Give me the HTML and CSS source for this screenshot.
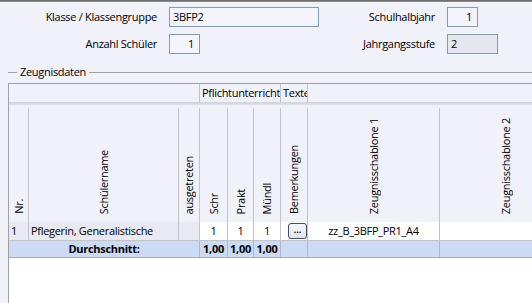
FILE: index.html
```html
<!DOCTYPE html>
<html lang="de">
<head>
<meta charset="utf-8">
<title>Zeugnisdaten</title>
<link rel="stylesheet" href="styles.css">
</head>
<body>
<div class="topline"></div>
<div class="form">
  <div class="lbl">Klasse / Klassengruppe</div>
  <div class="inp w150">3BFP2</div>
  <div class="lbl">Schulhalbjahr</div>
  <div class="inp num w30">1</div>
  <div class="lbl">Anzahl Schüler</div>
  <div class="inp num w30">1</div>
  <div class="lbl">Jahrgangsstufe</div>
  <div class="inp dis w50">2</div>
</div>
<div class="group"><span class="gl-left"></span><span class="gtitle">Zeugnisdaten</span><span class="gl-right"></span></div>
<div class="grid">
  <div class="band b1"></div>
  <div class="band b2">Pflichtunterricht</div>
  <div class="band b3">Texte</div>
  <div class="band b4"></div>
  <div class="sep"></div>

  <div class="hc"><div class="hi"><span class="vt">Nr.</span></div></div>
  <div class="hc"><div class="hi"><span class="vt">Schülername</span></div></div>
  <div class="hc"><div class="hi"><span class="vt">ausgetreten</span></div></div>
  <div class="hc"><div class="hi"><span class="vt">Schr</span></div></div>
  <div class="hc"><div class="hi"><span class="vt">Prakt</span></div></div>
  <div class="hc"><div class="hi"><span class="vt">Mündl</span></div></div>
  <div class="hc"><div class="hi"><span class="vt">Bemerkungen</span></div></div>
  <div class="hc"><div class="hi"><span class="vt">Zeugnisschablone 1</span></div></div>
  <div class="hc"><div class="hi"><span class="vt">Zeugnisschablone 2</span></div></div>

  <div class="dc gray left">1</div>
  <div class="dc gray left">Pflegerin, Generalistische</div>
  <div class="dc gray"></div>
  <div class="dc ctr">1</div>
  <div class="dc ctr">1</div>
  <div class="dc ctr">1</div>
  <div class="dc btncell"><span class="btn">...</span></div>
  <div class="dc ctr">zz_B_3BFP_PR1_A4</div>
  <div class="dc"></div>

  <div class="sc span3">Durchschnitt:</div>
  <div class="sc">1,00</div>
  <div class="sc">1,00</div>
  <div class="sc">1,00</div>
  <div class="sc"></div>
  <div class="sc"></div>
  <div class="sc"></div>
</div>
</body>
</html>
```
FILE: styles.css
```css
* { box-sizing: border-box; }
html, body {
  margin: 0;
  padding: 0;
  width: 532px;
  height: 303px;
  overflow: hidden;
  background: #f1f1fa;
  font-family: "Open Sans", "Noto Sans", sans-serif;
  font-size: 11px;
  letter-spacing: -0.3px;
  color: #000;
}
.topline {
  height: 2px;
  border-top: 1px solid #6e6e6e;
  border-bottom: 1px solid #8a8a8a;
}
.form {
  display: grid;
  grid-template-columns: 157px 150px 104px 50px;
  grid-template-rows: 20px 20px;
  column-gap: 12px;
  row-gap: 7px;
  padding-top: 5px;
}
.lbl {
  text-align: right;
  line-height: 20px;
  white-space: nowrap;
}
.inp {
  height: 20px;
  border: 1px solid #7f9db9;
  background: #f4f4fc;
  line-height: 18px;
  padding: 0 3px;
}
.w150 { width: 150px; }
.w30 { width: 31px; }
.w50 { width: 51px; }
.num { text-align: right; padding-right: 5px; }
.dis { background: #e6e6ee; }

.group {
  display: flex;
  align-items: center;
  height: 14px;
  margin: 11px 0 4px 8px;
}
.gl-left { width: 9px; height: 1px; background: #a0a0a0; }
.gl-right { flex: 1; height: 1px; background: #a0a0a0; }
.gtitle { padding: 0 3px; line-height: 14px; }

.grid {
  margin-left: 8px;
  width: 600px;
  height: 220px;
  border-left: 1px solid #a0a0a0;
  border-top: 1px solid #a0a0a0;
  background: #fff;
  display: grid;
  grid-template-columns: 20px 150px 21px 28px 26px 27px 27px 132px 132px;
  grid-template-rows: 18px 3px 117px 19px 17px;
  align-content: start;
}
.band {
  background: #f1f1fa;
  line-height: 18px;
  white-space: nowrap;
  overflow: hidden;
  padding-left: 2px;
}
.b1 { grid-column: 1 / 4; border-right: 1px solid #c4c4c8; }
.b2 { grid-column: 4 / 7; border-right: 1px solid #c4c4c8; }
.b3 { grid-column: 7 / 8; border-right: 1px solid #c4c4c8; }
.b4 { grid-column: 8 / 10; }
.sep {
  grid-column: 1 / -1;
  background: linear-gradient(#cfcfdb, #e2e2ec);
}
.hc {
  background: #f1f1fa;
  padding-top: 3px;
}
.hi {
  height: 100%;
  border-right: 1px solid #c4c4c8;
  display: flex;
  flex-direction: column;
  justify-content: flex-end;
  align-items: center;
  padding-bottom: 8px;
}
.vt {
  writing-mode: vertical-rl;
  transform: rotate(180deg);
  line-height: 14px;
  white-space: nowrap;
}
.dc {
  border-right: 1px solid #c4c4c8;
  border-bottom: 1px solid #c4c4c8;
  background: #fff;
  line-height: 18px;
  white-space: nowrap;
  overflow: hidden;
}
.dc.gray { background: #e9e9f1; }
.dc.left { padding-left: 2px; }
.dc.ctr { text-align: center; }
.btncell {
  display: flex;
  justify-content: flex-end;
  align-items: center;
}
.btn {
  width: 19px;
  height: 16px;
  border: 1px solid #3d4d70;
  border-radius: 3px;
  background: linear-gradient(#f6f6fc, #e4e4f0);
  font-size: 9px;
  font-weight: bold;
  letter-spacing: 0;
  line-height: 12px;
  text-align: center;
}
.sc {
  background: #ccdaf4;
  border-right: 1px solid #b4b8c4;
  border-bottom: 1px solid #a8a8b0;
  font-weight: bold;
  text-align: center;
  line-height: 16px;
  white-space: nowrap;
}
.span3 { grid-column: 1 / 4; }
```
